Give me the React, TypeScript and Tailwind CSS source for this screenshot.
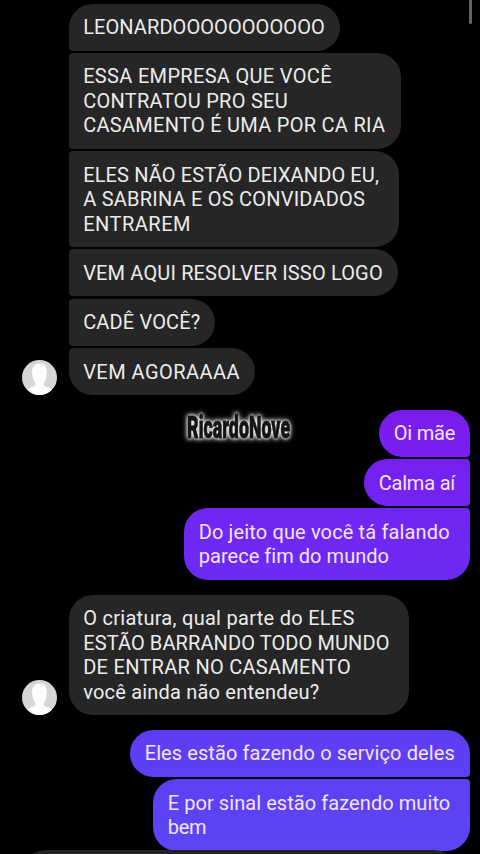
type Line = { text: string; tracking: string };
type Message = { box: string; lines: Line[] };

const received: Message[] = [
  {
    box: "w-[271.5px] rounded-[24px] rounded-bl-[4px]",
    lines: [{ text: "LEONARDOOOOOOOOOOO", tracking: "tracking-[0.08px]" }],
  },
  {
    box: "w-[332px] rounded-[24px] rounded-l-[4px]",
    lines: [
      { text: "ESSA EMPRESA QUE VOCÊ", tracking: "tracking-[0.32px]" },
      { text: "CONTRATOU PRO SEU", tracking: "tracking-[0.28px]" },
      { text: "CASAMENTO É UMA POR CA RIA", tracking: "tracking-[0.28px]" },
    ],
  },
  {
    box: "w-[330px] rounded-[24px] rounded-l-[4px]",
    lines: [
      { text: "ELES NÃO ESTÃO DEIXANDO EU,", tracking: "tracking-[0.12px]" },
      { text: "A SABRINA E OS CONVIDADOS", tracking: "tracking-[0.22px]" },
      { text: "ENTRAREM", tracking: "tracking-[0.5px]" },
    ],
  },
  {
    box: "w-[329.5px] rounded-[24px] rounded-l-[4px]",
    lines: [{ text: "VEM AQUI RESOLVER ISSO LOGO", tracking: "tracking-[0.15px]" }],
  },
  {
    box: "w-[146.5px] rounded-[24px] rounded-l-[4px]",
    lines: [{ text: "CADÊ VOCÊ?", tracking: "tracking-[0.15px]" }],
  },
  {
    box: "w-[186px] rounded-[24px] rounded-tl-[4px]",
    lines: [{ text: "VEM AGORAAAA", tracking: "tracking-[0.45px]" }],
  },
];

const calmDown: Message[] = [
  {
    box: "w-[91px] rounded-[24px] rounded-br-[4px] bg-linear-to-b from-[#7b1bea] to-[#771ff0]",
    lines: [{ text: "Oi mãe", tracking: "tracking-[-0.2px]" }],
  },
  {
    box: "w-[106px] rounded-[24px] rounded-r-[4px] bg-linear-to-b from-[#761ff0] to-[#7224f2]",
    lines: [{ text: "Calma aí", tracking: "tracking-[-0.2px]" }],
  },
  {
    box: "w-[286px] rounded-[24px] rounded-tr-[4px] bg-linear-to-b from-[#7125f2] to-[#6b2bf2]",
    lines: [
      { text: "Do jeito que você tá falando", tracking: "tracking-[0.14px]" },
      { text: "parece fim do mundo", tracking: "tracking-[0.04px]" },
    ],
  },
];

const complaint: Message = {
  box: "w-[340.5px] rounded-[24px]",
  lines: [
    { text: "O criatura, qual parte do ELES", tracking: "tracking-[0.28px]" },
    { text: "ESTÃO BARRANDO TODO MUNDO", tracking: "tracking-[0.1px]" },
    { text: "DE ENTRAR NO CASAMENTO", tracking: "tracking-[0.28px]" },
    { text: "você ainda não entendeu?", tracking: "tracking-[0.2px]" },
  ],
};

const service: Message[] = [
  {
    box: "w-[340px] rounded-[24px] rounded-br-[4px] bg-linear-to-b from-[#603cf4] to-[#5e40f4]",
    lines: [{ text: "Eles estão fazendo o serviço deles", tracking: "tracking-[0.09px]" }],
  },
  {
    box: "w-[317px] rounded-[24px] rounded-tr-[4px] bg-linear-to-b from-[#5d40f4] to-[#5b45f3]",
    lines: [
      { text: "E por sinal estão fazendo muito", tracking: "tracking-[0.07px]" },
      { text: "bem", tracking: "tracking-[-0.2px]" },
    ],
  },
];

function Bubble({ message, tone }: { message: Message; tone: string }) {
  return (
    <div className={`shrink-0 whitespace-nowrap pt-[11.5px] pr-0 pb-[11px] pl-[14.7px] text-[20px] leading-[24.5px] ${tone} ${message.box}`}>
      {message.lines.map((line) => (
        <div key={line.text} className={line.tracking}>
          {line.text}
        </div>
      ))}
    </div>
  );
}

function Avatar() {
  return (
    <svg viewBox="0 0 34 34" className="size-[35px] shrink-0">
      <defs>
        <clipPath id="disc">
          <circle cx="17" cy="17" r="17" />
        </clipPath>
      </defs>
      <g clipPath="url(#disc)">
        <rect width="34" height="34" fill="#d6d6d6" />
        <path
          d="M17 3.3c-4.5 0-7.2 3.2-7.2 8.200 0 4.300 1 8.500 3 11v1.800c-1.200 2-5 2.200-7.800 4.200V34h24v-5.500c-2.800-2-6.600-2.200-7.800-4.200v-1.800c2-2.500 3-6.700 3-11 0-5-2.700-8.200-7.200-8.200z"
          fill="#fdfdfd"
        />
      </g>
    </svg>
  );
}

function Received({ messages }: { messages: Message[] }) {
  return (
    <div className="flex items-end gap-[11.5px] pl-[22px]">
      <Avatar />
      <div className="flex flex-col items-start gap-[2.3px]">
        {messages.map((message) => (
          <Bubble key={message.lines[0].text} message={message} tone="bg-[#262626] text-[#ececec]" />
        ))}
      </div>
    </div>
  );
}

function Sent({ messages }: { messages: Message[] }) {
  return (
    <div className="flex flex-col items-end gap-[2.3px] pr-[10px]">
      {messages.map((message) => (
        <Bubble key={message.lines[0].text} message={message} tone="text-[#f4e4ff]" />
      ))}
    </div>
  );
}

export default function App() {
  return (
    <main className="relative h-[854px] w-[480px] overflow-hidden bg-black font-['Roboto',sans-serif]">
      <div className="flex flex-col pt-[3.6px]">
        <Received messages={received} />
        <div className="mt-[14.7px]">
          <Sent messages={calmDown} />
        </div>
        <div className="mt-[15px]">
          <Received messages={[complaint]} />
        </div>
        <div className="mt-[14.5px]">
          <Sent messages={service} />
        </div>
      </div>

      <div className="absolute top-[410px] left-[187px] drop-shadow-[0_0_2.5px_#ffffff]">
        <div className="origin-left scale-x-[0.575] text-[31px] leading-[36px] font-black whitespace-nowrap text-[#151515] drop-shadow-[0_0_1.5px_#ffffff] [-webkit-text-stroke:0.8px_#151515]">
          RicardoNove
        </div>
      </div>

      <div className="absolute top-0 right-[8px] h-[24px] w-[3px] rounded-b-full bg-[#636363]" />
      <div className="absolute top-[849.5px] left-[22px] h-[48px] w-[436px] rounded-t-[24px] bg-[#222222]" />
    </main>
  );
}
